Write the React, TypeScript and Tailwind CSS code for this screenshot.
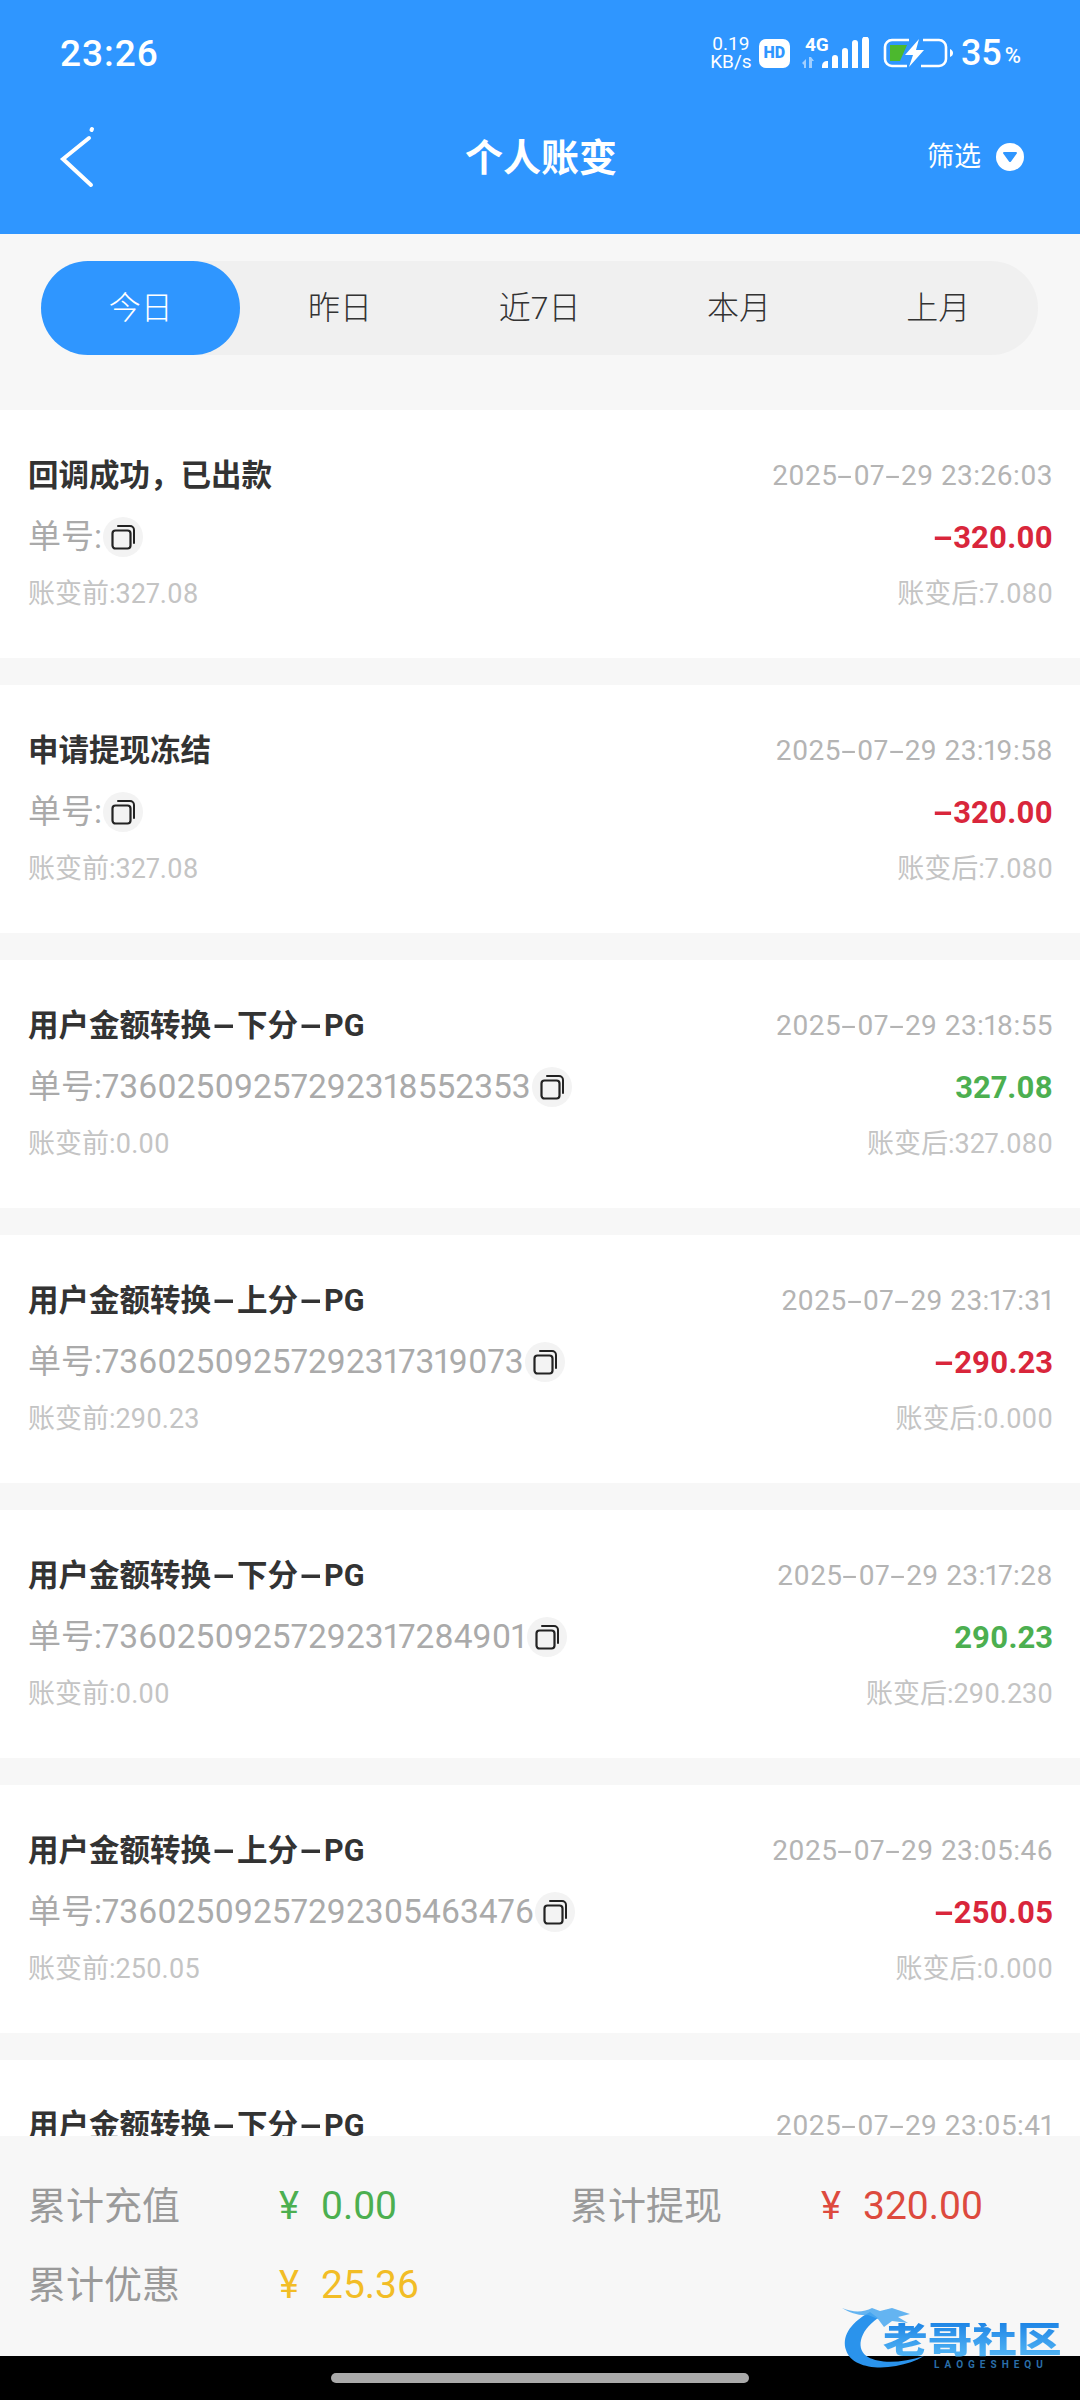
const font = "[font-family:Roboto,'Noto_Sans_CJK_SC',sans-serif]";

const tabs = ['今日', '昨日', '近7日', '本月', '上月'];

type Row = { title: string; time: string; no: string; amount: string; up?: boolean; before: string; after: string };

const rows: Row[] = [
  { title: '回调成功，已出款', time: '2025-07-29 23:26:03', no: '', amount: '-320.00', before: '327.08', after: '7.080' },
  { title: '申请提现冻结', time: '2025-07-29 23:19:58', no: '', amount: '-320.00', before: '327.08', after: '7.080' },
  { title: '用户金额转换-下分-PG', time: '2025-07-29 23:18:55', no: '73602509257292318552353', amount: '327.08', up: true, before: '0.00', after: '327.080' },
  { title: '用户金额转换-上分-PG', time: '2025-07-29 23:17:31', no: '73602509257292317319073', amount: '-290.23', before: '290.23', after: '0.000' },
  { title: '用户金额转换-下分-PG', time: '2025-07-29 23:17:28', no: '73602509257292317284901', amount: '290.23', up: true, before: '0.00', after: '290.230' },
  { title: '用户金额转换-上分-PG', time: '2025-07-29 23:05:46', no: '73602509257292305463476', amount: '-250.05', before: '250.05', after: '0.000' },
  { title: '用户金额转换-下分-PG', time: '2025-07-29 23:05:41', no: '73602509257292305411234', amount: '250.05', up: true, before: '0.00', after: '250.050' },
];

// the screenshot's font has long hyphens, so stretch them
function Dashed({ text, wide }: { text: string; wide?: boolean }) {
  const parts = text.split('-');
  return (
    <>
      {parts.map((p, i) => (
        <span key={i}>
          {i > 0 && <span className={wide ? 'mx-[7px] inline-block scale-x-[2.2]' : 'mx-[4px] inline-block scale-x-[1.9]'}>-</span>}
          {p}
        </span>
      ))}
    </>
  );
}

function CopyIcon() {
  return (
    <span className="ml-[1px] flex h-[40px] w-[40px] shrink-0 items-center justify-center rounded-full bg-[#f3f3f3]">
      <svg width="28" height="28" viewBox="0 0 28 28" fill="none" stroke="#222">
        <rect x="3.500" y="7.500" width="18" height="18" rx="3" strokeWidth="2.200" />
        <path d="M9 3h12a4 4 0 0 1 4 4v13" strokeWidth="2" strokeLinecap="round" />
      </svg>
    </span>
  );
}

function StatusIcons() {
  return (
    <div className="flex items-center text-white">
      <div className="flex w-[44px] flex-col items-center text-[19px] leading-[18px]">
        <span>0.19</span>
        <span>KB/s</span>
      </div>
      <span className="ml-[6px] flex h-[29px] w-[31px] items-center justify-center rounded-[7px] bg-white text-[16px] font-black text-[#2f96ff]">HD</span>
      <div className="relative ml-[11px] h-[32px] w-[74px]">
        <span className="absolute -top-[1px] left-[4px] text-[19px] leading-[18px] font-bold">4G</span>
        <svg className="absolute inset-0" width="74" height="32" viewBox="0 0 74 32" fill="white">
          <path d="M1 26l4-4v9H3v-3zM8 20h2l3 4h-2v7H8z" opacity="0.55" />
          <path d="M21 31v-2a5 5 0 0 1 6-5v7zM31 31V21a3 3 0 0 1 6 0v10zM41 31V14a3 3 0 0 1 6 0v17zM51 31V6a3 3 0 0 1 6 0v25zM61 31V3a3 3 0 0 1 7 0v28z" />
        </svg>
      </div>
      <svg className="ml-[8px]" width="70" height="30" viewBox="0 0 70 30" fill="none">
        <path d="M26 2H9a7 7 0 0 0-7 7v12a7 7 0 0 0 7 7h15M38 28h18a7 7 0 0 0 7-7V9a7 7 0 0 0-7-7H40" stroke="white" strokeWidth="2.600" />
        <path d="M7 7h17l-7 16H7z" fill="#4cb82e" />
        <path d="M36 1L22 17h8l-4 12 15-17h-8z" fill="white" />
        <path d="M67 11c2 1 3 2 3 4s-1 3-3 4z" fill="white" />
      </svg>
      <span className="ml-[8px] text-[36px] leading-none font-medium">35</span>
      <span className="ml-[3px] mt-[6px] text-[22px] leading-none font-medium">%</span>
    </div>
  );
}

function Card({ row }: { row: Row }) {
  return (
    <div className="h-[248px] shrink-0 bg-white pl-[28px] pr-[27px] pt-[48px] proportional-nums">
      <div className="flex h-[36px] items-center justify-between">
        <span className="text-[30.500px] leading-none font-bold text-[#333]">
          <Dashed text={row.title} wide />
        </span>
        <span className="text-[28px] leading-none tracking-[0.4px] text-[#b4b4b4]">
          <Dashed text={row.time} />
        </span>
      </div>
      <div className="mt-[21px] flex h-[44px] items-center justify-between">
        <div className="flex items-center text-[33px] leading-none text-[#aaa]">
          <span>
            单号:<span className="text-[33.500px]">{row.no}</span>
          </span>
          <CopyIcon />
        </div>
        <span className={`text-[31px] leading-none font-bold ${row.up ? 'text-[#4caf50]' : 'text-[#d9263b]'}`}>
          <Dashed text={row.amount} />
        </span>
      </div>
      <div className="mt-[17px] flex h-[36px] items-center justify-between text-[27px] leading-none text-[#c4c4c4]">
        <span>账变前:{row.before}</span>
        <span>账变后:{row.after}</span>
      </div>
    </div>
  );
}

function Stat({ label, value, color }: { label: string; value: string; color: string }) {
  return (
    <div className="flex h-[60px] items-center">
      <span className="w-[251px] text-[38px] leading-none text-[#9a9a9a]">{label}</span>
      <span className={`w-[42px] text-[38px] leading-none ${color}`}>¥</span>
      <span className={`text-[39px] leading-none ${color}`}>{value}</span>
    </div>
  );
}

export default function App() {
  return (
    <div className={`relative flex h-[2400px] w-[1080px] flex-col overflow-hidden bg-[#f7f7f7] ${font}`}>
      <header className="h-[234px] shrink-0 bg-[#2f96ff] text-white">
        <div className="flex h-[106px] items-center justify-between pl-[60px] pr-[59px]">
          <span className="text-[37px] leading-none font-medium tracking-[1px]">23:26</span>
          <StatusIcons />
        </div>
        <div className="grid h-[102px] grid-cols-[1fr_auto_1fr] items-center pl-[58px] pr-[56px]">
          <svg width="40" height="64" viewBox="0 0 40 64" fill="none" stroke="white" strokeWidth="4" strokeLinecap="round">
            <path d="M31 13L5 34l28 26" />
            <path d="M34 4l-.5 1" />
          </svg>
          <span className="mt-[2px] text-[38px] leading-none font-bold">个人账变</span>
          <div className="flex items-center justify-end">
            <span className="text-[27px] leading-none">筛选</span>
            <span className="ml-[15px] flex h-[28px] w-[28px] items-center justify-center rounded-full bg-white">
              <svg width="16" height="12" viewBox="0 0 16 12"><path d="M2 1h12a1 1 0 0 1 .8 1.600L9 10.500a1.300 1.300 0 0 1-2 0L1.200 2.600A1 1 0 0 1 2 1z" fill="#2f96ff" /></svg>
            </span>
          </div>
        </div>
      </header>

      <div className="mx-[41px] mt-[27px] flex h-[94px] w-[997px] shrink-0 rounded-[47px] bg-[#f0f0f0]">
        {tabs.map((t, i) => (
          <div
            key={t}
            className={`flex flex-1 items-center justify-center rounded-[47px] text-[32px] leading-none font-light ${i === 0 ? 'bg-[#2f96ff] text-white' : 'text-[#333]'}`}
          >
            {t}
          </div>
        ))}
      </div>

      <div className="mt-[55px] flex min-h-0 flex-1 flex-col gap-[27px] overflow-hidden">
        {rows.map((r, i) => (
          <Card key={i} row={r} />
        ))}
      </div>

      <footer className="h-[220px] shrink-0 bg-[#f7f7f7] pl-[28px] pt-[40px]">
        <div className="grid grid-cols-[542px_1fr] gap-y-[19px]">
          <Stat label="累计充值" value="0.00" color="text-[#4caf50]" />
          <Stat label="累计提现" value="320.00" color="text-[#dd4a3e]" />
          <Stat label="累计优惠" value="25.36" color="text-[#f2bd26]" />
        </div>
      </footer>

      <div className="flex h-[44px] shrink-0 items-center justify-center bg-black">
        <div className="h-[10px] w-[418px] rounded-full bg-[#aaa]" />
      </div>

      {/* watermark */}
      <div className="absolute left-[840px] top-[2304px] h-[72px] w-[230px]">
        <svg className="absolute inset-0" width="230" height="72" viewBox="0 0 230 72" fill="none">
          <path d="M30 8C8 20 2 34 6 46c5 16 28 20 50 16 10-2 20-5 28-10-22 7-44 8-56 1C16 46 18 28 38 14z" fill="#2a93ec" />
          <path d="M2 4c12 5 22 4 30 0l8 3 12-3 18 6-12 3 10 6-16-2-8 6-6-8-10-4C20 12 10 9 2 4z" fill="#4aa8f0" opacity="0.85" />
        </svg>
        <span className="absolute left-[43px] top-[19px] origin-left scale-x-[1.24] whitespace-nowrap bg-linear-to-b from-[#1f86e6] to-[#55b8f5] bg-clip-text text-[36px] leading-none font-black text-transparent">老哥社区</span>
        <span className="absolute left-[94px] top-[56px] whitespace-nowrap text-[10px] leading-none font-bold tracking-[5px] text-[#2a6ea8]">LAOGESHEQU</span>
      </div>
    </div>
  );
}
